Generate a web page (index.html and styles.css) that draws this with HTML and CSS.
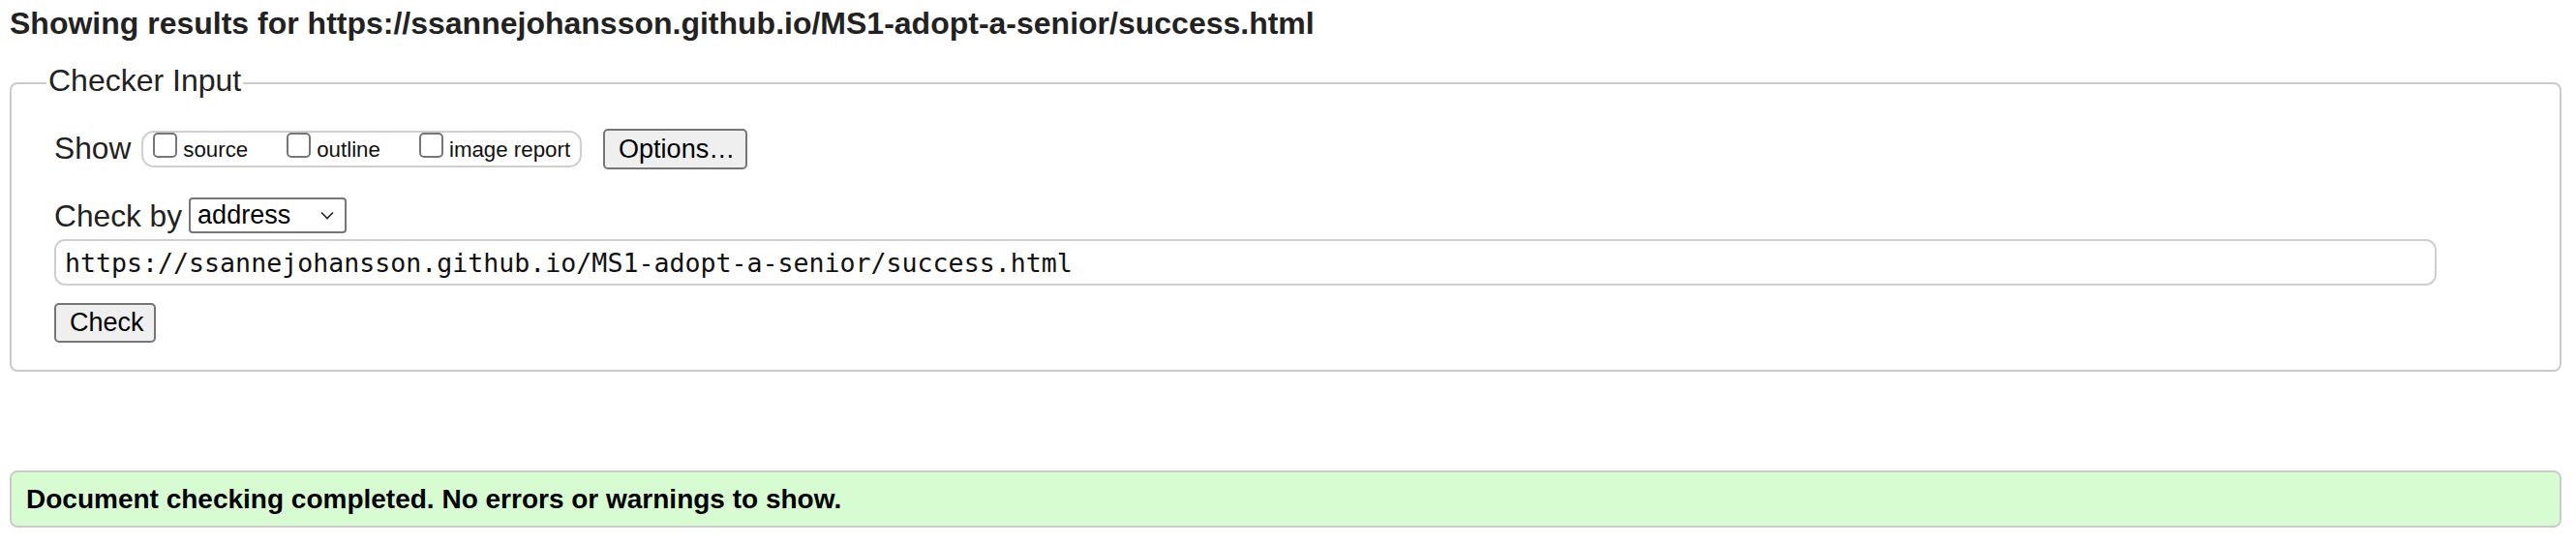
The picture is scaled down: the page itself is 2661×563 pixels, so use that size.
FILE: index.html
```html
<!DOCTYPE html>
<html lang="en">
<head>
<meta charset="utf-8">
<title>Showing results</title>
<link rel="stylesheet" href="styles.css">
</head>
<body>
<h2 class="title">Showing results for https://ssannejohansson.github.io/MS1-adopt-a-senior/success.html</h2>
<fieldset class="checker">
  <legend class="legend">Checker Input</legend>
  <div class="row row-show">
    <span class="label label-show">Show</span>
    <div class="group">
      <label class="opt"><input type="checkbox" class="cb"><span class="opt-text">source</span></label>
      <label class="opt"><input type="checkbox" class="cb"><span class="opt-text">outline</span></label>
      <label class="opt"><input type="checkbox" class="cb"><span class="opt-text">image report</span></label>
    </div>
    <button class="btn btn-options" type="button">Options…</button>
  </div>
  <div class="row row-by">
    <span class="label">Check by</span>
    <div class="select">
      <span class="select-text">address</span>
      <svg class="chev" width="14" height="9" viewBox="0 0 14 9"><path d="M1 1.5 L7 7.5 L13 1.5" fill="none" stroke="#222" stroke-width="1.6"/></svg>
    </div>
  </div>
  <div class="url">https://ssannejohansson.github.io/MS1-adopt-a-senior/success.html</div>
  <div class="actions"><button class="btn btn-check" type="button">Check</button></div>
</fieldset>
<div class="success">Document checking completed. No errors or warnings to show.</div>
</body>
</html>
```
FILE: styles.css
```css
html, body {
  background: #fff;
}
body {
  margin: 0;
  padding: 6px 15px 0 10px;
  font-family: "Liberation Sans", Arial, sans-serif;
  color: #222;
}
.title {
  margin: 0;
  font-size: 32px;
  line-height: 36px;
  font-weight: 700;
  color: #222;
}
.checker {
  margin: 26px 0 0 0;
  padding: 29px 127px 28px 44px;
  border: 2px solid #cbcbcb;
  border-radius: 8px;
  min-width: 0;
}
.legend {
  font-size: 32px;
  line-height: 31px;
  padding: 0 2px 5px 2px;
  margin-left: -8px;
  color: #222;
}
.row {
  display: flex;
  align-items: center;
}
.row-show {
  height: 42px;
}
.label {
  font-size: 31.7px;
  line-height: 36px;
  color: #222;
}
.label-show {
  margin-right: 11px;
  margin-bottom: 3px;
}
.group {
  display: flex;
  align-items: flex-start;
  gap: 40px;
  height: 38px;
  box-sizing: border-box;
  border: 2px solid #cfcfcf;
  border-radius: 13px;
  padding: 0 10px;
}
.opt {
  display: flex;
  align-items: flex-start;
}
.cb {
  appearance: none;
  -webkit-appearance: none;
  margin: 0 6px 0 0;
  width: 25px;
  height: 26px;
  box-sizing: border-box;
  border: 2px solid #767676;
  border-radius: 5px;
  background: #fff;
}
.opt-text {
  font-size: 22.3px;
  line-height: 26px;
  padding-top: 5px;
  color: #111;
}
.btn {
  font-family: "Liberation Sans", Arial, sans-serif;
  font-size: 27px;
  color: #000;
  background: #efefef;
  border: 2px solid #767676;
  border-radius: 5px;
  box-sizing: border-box;
  padding: 0 14px;
  margin: 0;
}
.btn-options {
  margin-left: 22px;
  height: 42px;
  width: 149px;
}
.row-by {
  margin-top: 29px;
  height: 37px;
}
.select {
  margin-left: 7px;
  width: 163px;
  height: 37px;
  box-sizing: border-box;
  border: 2px solid #767676;
  border-radius: 4px;
  display: flex;
  align-items: center;
  justify-content: space-between;
  padding: 0 8px 0 7px;
  background: #fff;
}
.select-text {
  font-size: 27px;
  color: #000;
}
.chev {
  display: block;
  margin-right: 3px;
}
.url {
  margin-top: 6px;
  height: 48px;
  box-sizing: border-box;
  border: 2px solid #cfcfcf;
  border-radius: 11px;
  padding: 0 9px;
  display: flex;
  align-items: center;
  font-family: "DejaVu Sans Mono", "Liberation Mono", monospace;
  font-size: 26.6px;
  color: #111;
}
.actions {
  margin-top: 18px;
  display: flex;
}
.btn-check {
  height: 41px;
  width: 105px;
}
.success {
  margin-top: 102px;
  height: 59px;
  box-sizing: border-box;
  border: 2px solid #cbcbcb;
  border-radius: 8px;
  background: #d8fcd1;
  padding: 0 15px;
  display: flex;
  align-items: center;
  font-size: 28px;
  font-weight: 700;
  color: #000;
}
```
